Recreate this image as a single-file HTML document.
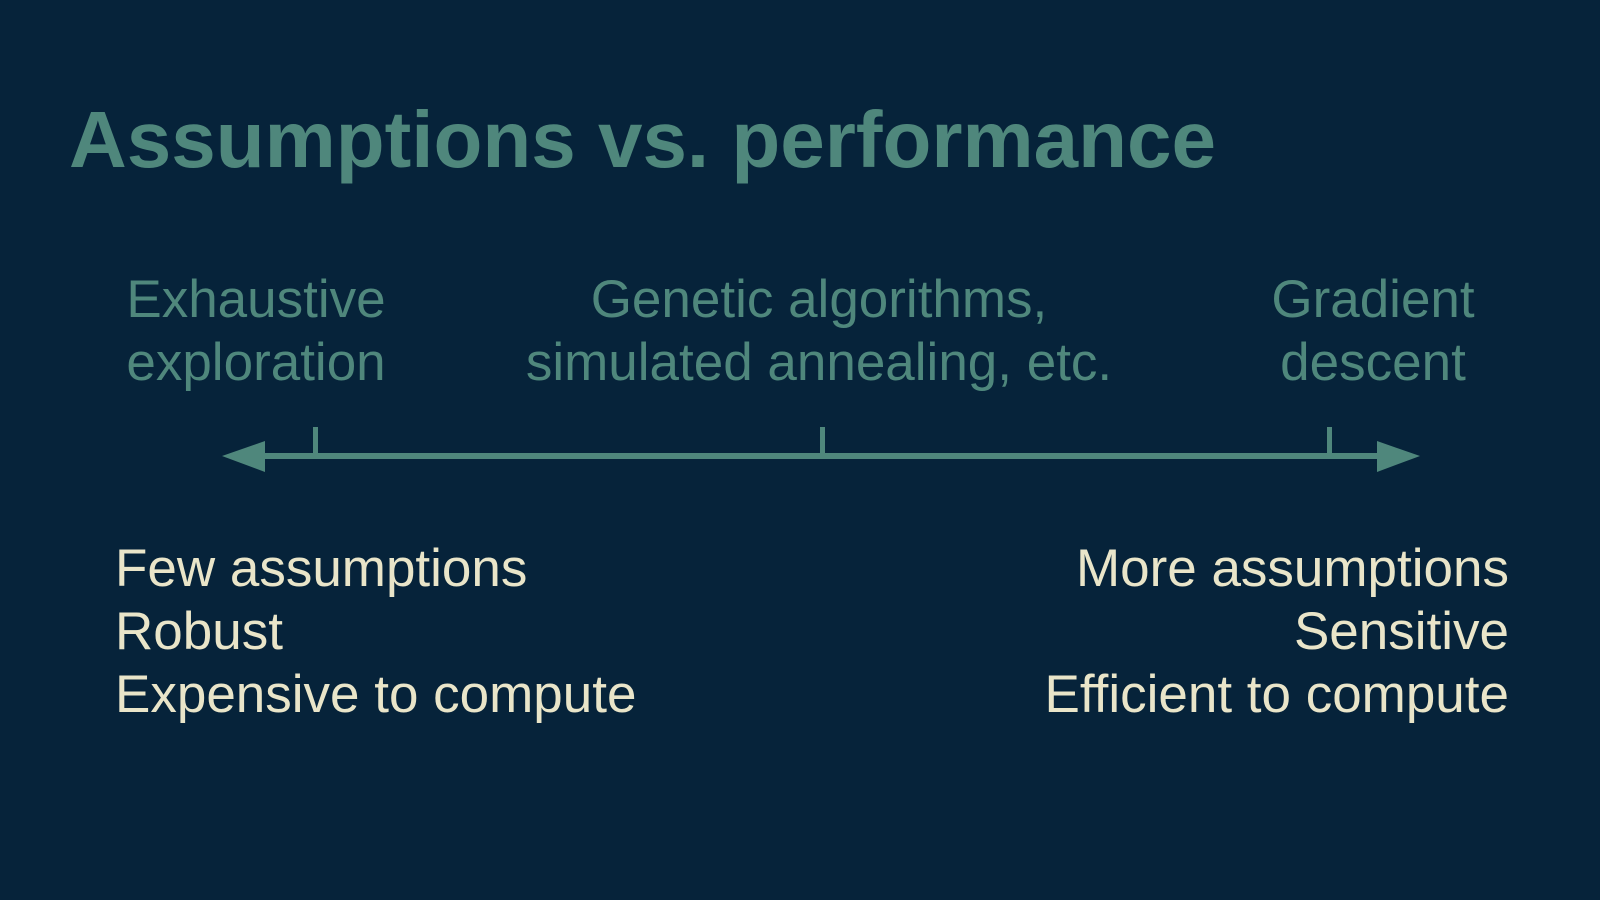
<!DOCTYPE html>
<html><head><style>
body{margin:0;width:1600px;height:900px;background:#06233a;overflow:hidden;font-family:"Liberation Sans",sans-serif;position:relative}
.t{position:absolute;white-space:nowrap;line-height:1}
.teal{color:#4f877c}
.cream{color:#e9e5c9}
</style></head><body>
<div class="t teal" style="left:69px;top:100px;font-size:80px;font-weight:bold">Assumptions vs. performance</div>
<div class="t teal" style="left:256px;top:268px;font-size:53px;line-height:63px;text-align:center;transform:translateX(-50%)">Exhaustive<br>exploration</div>
<div class="t teal" style="left:819px;top:268px;font-size:53px;line-height:63px;text-align:center;transform:translateX(-50%)">Genetic algorithms,<br>simulated annealing, etc.</div>
<div class="t teal" style="left:1373px;top:268px;font-size:53px;line-height:63px;text-align:center;transform:translateX(-50%)">Gradient<br>descent</div>
<svg style="position:absolute;left:0;top:0" width="1600" height="900">
<g fill="#4f877c">
<rect x="262" y="453" width="1118" height="6"/>
<polygon points="222,456 265,441 265,472"/>
<polygon points="1420,456 1377,441 1377,472"/>
<rect x="313" y="427" width="5" height="28"/>
<rect x="820" y="427" width="5" height="28"/>
<rect x="1327" y="427" width="5" height="28"/>
</g></svg>
<div class="t cream" style="left:115px;top:537px;font-size:53px;line-height:63px">Few assumptions<br>Robust<br>Expensive to compute</div>
<div class="t cream" style="right:91px;top:537px;font-size:53px;line-height:63px;text-align:right">More assumptions<br>Sensitive<br>Efficient to compute</div>
</body></html>
